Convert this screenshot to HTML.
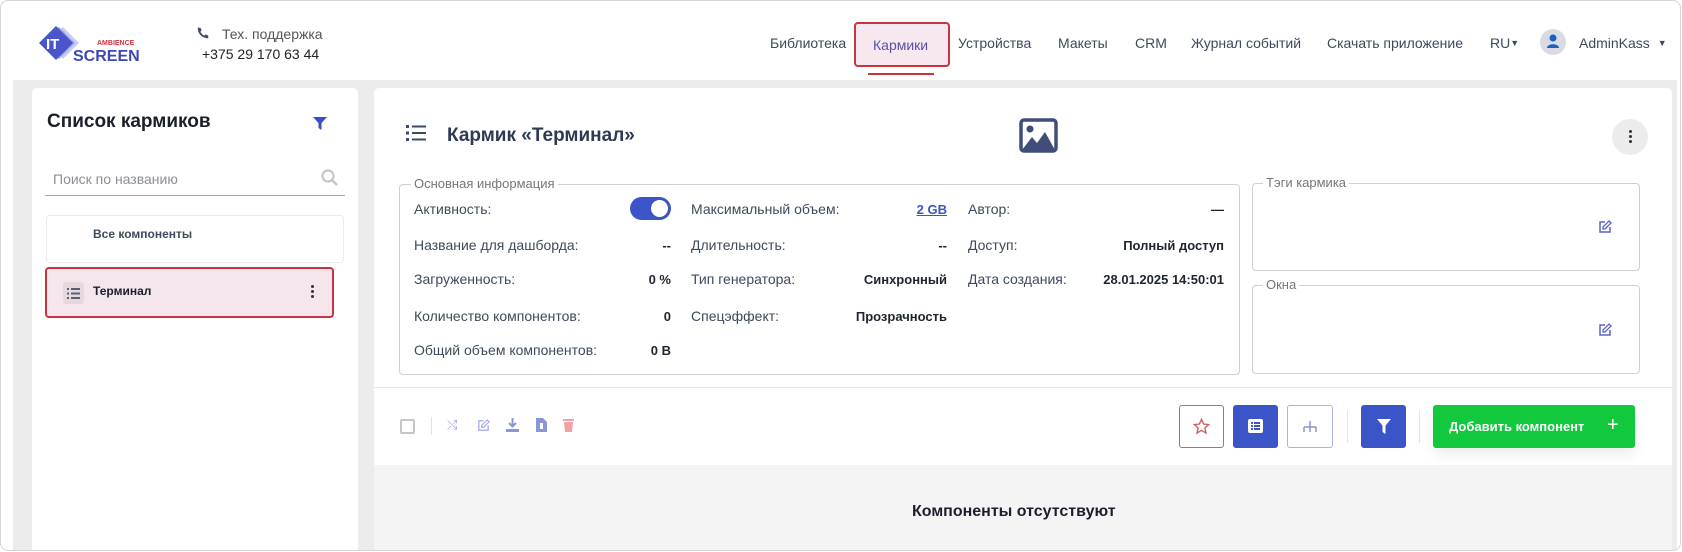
<!DOCTYPE html>
<html><head><meta charset="utf-8"><style>
*{box-sizing:border-box;margin:0;padding:0}
body{width:1682px;height:552px;overflow:hidden;background:#fff;font-family:"Liberation Sans",sans-serif;color:#3d4a5c;position:relative}
.frame{position:absolute;left:0;top:0;width:1681px;height:551px;border:1px solid #d6d6d6;border-radius:8px;overflow:hidden;background:#fff}
.abs{position:absolute;white-space:nowrap}
.gray{position:absolute;left:12px;top:79px;right:3px;bottom:0;background:#ececec}
.panel{position:absolute;background:#fff;border-radius:5px}
.nav{font-size:14px;color:#3d4a5c;top:34px}
.lbl{font-size:14px;color:#3d4a5c}
.val{font-size:13px;font-weight:bold;color:#1f2530;text-align:right}
.btn{position:absolute;top:404px;height:43px;border-radius:3px}
.dot{position:absolute;width:3px;height:3px;border-radius:50%;background:#333}
</style></head><body><div class="frame">
<svg class="abs" style="left:38px;top:22px" width="100" height="42" viewBox="0 0 100 42">
<path d="M24 4 L40 20 L24 36 L8 20Z" fill="#c8cdf5"/>
<path d="M20 4 L36 20 L20 36 L4 20Z" fill="#9aa3ec"/>
<path d="M17 3 L34 20 L17 37 L0 20Z" fill="#4a55c9"/>
<text x="7" y="26" font-family="Liberation Sans" font-weight="bold" font-size="15" fill="#fff">IT</text>
<text x="58" y="22" font-family="Liberation Sans" font-weight="bold" font-size="7" fill="#d0343f">AMBIENCE</text>
<text x="34" y="38" font-family="Liberation Sans" font-weight="bold" font-size="16" fill="#3b48b8">SCREEN</text>
</svg>
<svg class="abs" style="left:195px;top:25px" width="14" height="14" viewBox="0 0 16 16"><path d="M14 11l-3-1.5-1.5 1.5C7.5 10 6 8.5 5 6.5L6.5 5 5 2 2 2C2 9 7 14 14 14Z" fill="#3d4a6a"/></svg>
<div class="abs" style="left:221px;top:25px;font-size:14px;color:#555">Тех. поддержка</div>
<div class="abs" style="left:201px;top:45px;font-size:14px;color:#222">+375 29 170 63 44</div>
<div class="abs nav" style="left:769px">Библиотека</div>
<div class="abs" style="left:853px;top:21px;width:96px;height:45px;border:2px solid #c9343f;border-radius:4px;background:#f6e8ee"></div>
<div class="abs nav" style="left:872px;top:36px;color:#5a4fa8">Кармики</div>
<div class="abs" style="left:867px;top:72px;width:66px;height:2px;background:#c9343f"></div>
<div class="abs nav" style="left:957px">Устройства</div>
<div class="abs nav" style="left:1057px">Макеты</div>
<div class="abs nav" style="left:1134px">CRM</div>
<div class="abs nav" style="left:1190px">Журнал событий</div>
<div class="abs nav" style="left:1326px">Скачать приложение</div>
<div class="abs nav" style="left:1489px">RU<span style="font-size:9px;vertical-align:2px">▼</span></div>
<div class="abs" style="left:1539px;top:28px;width:26px;height:26px;border-radius:50%;background:#d8dbe3"></div>
<svg class="abs" style="left:1545px;top:32px" width="14" height="16" viewBox="0 0 14 16"><circle cx="7" cy="5" r="3.5" fill="#1c5fbf"/><path d="M1 15 C1 10 13 10 13 15Z" fill="#1c5fbf"/></svg>
<div class="abs nav" style="left:1578px">AdminKass <span style="font-size:9px;vertical-align:2px;margin-left:4px">▼</span></div>

<div class="gray"></div>
<div class="panel" style="left:31px;top:87px;width:326px;height:470px"></div>
<div class="abs" style="left:46px;top:110px;font-size:19px;font-weight:bold;color:#1a1f2b">Список кармиков</div>
<svg class="abs" style="left:312px;top:116px" width="14" height="13" viewBox="0 0 14 13"><path d="M0 0H14L8.5 6V13L5.5 11V6Z" fill="#3a4bc4"/></svg>
<div class="abs" style="left:52px;top:170px;font-size:14px;color:#8a8f98">Поиск по названию</div>
<svg class="abs" style="left:320px;top:168px" width="18" height="18" viewBox="0 0 18 18"><circle cx="7" cy="7" r="5.5" fill="none" stroke="#c4c6cb" stroke-width="2.2"/><path d="M11 11L16 16" stroke="#c4c6cb" stroke-width="2.5"/></svg>
<div class="abs" style="left:44px;top:194px;width:300px;height:1px;background:#a9abb0"></div>
<div class="abs" style="left:45px;top:214px;width:298px;height:48px;border:1px solid #ebebeb;border-radius:4px"></div>
<div class="abs" style="left:92px;top:226px;font-size:12px;font-weight:bold;color:#3d4a5c">Все компоненты</div>
<div class="abs" style="left:44px;top:266px;width:289px;height:51px;border:2px solid #c9343f;border-radius:4px;background:#f4e6ec"></div>
<div class="abs" style="left:62px;top:281px;width:21px;height:22px;border-radius:3px;background:#e6d8dc"></div>
<svg class="abs" style="left:66px;top:287px" width="13" height="11" viewBox="0 0 13 11"><g fill="#5a6072"><rect x="0" y="0" width="2" height="2"/><rect x="4" y="0" width="9" height="2"/><rect x="0" y="4.5" width="2" height="2"/><rect x="4" y="4.5" width="9" height="2"/><rect x="0" y="9" width="2" height="2"/><rect x="4" y="9" width="9" height="2"/></g></svg>
<div class="abs" style="left:92px;top:283px;font-size:12px;font-weight:bold;color:#1a1f2b">Терминал</div>
<div class="dot" style="left:310px;top:284px"></div><div class="dot" style="left:310px;top:289px"></div><div class="dot" style="left:310px;top:294px"></div>

<div class="panel" style="left:373px;top:87px;width:1298px;height:470px"></div>
<div class="abs" style="left:373px;top:464px;width:1298px;height:90px;background:#f4f4f4"></div>
<svg class="abs" style="left:405px;top:124px" width="20" height="16" viewBox="0 0 20 16"><g fill="#3d4a6a"><rect x="0" y="0" width="3" height="3"/><rect x="6" y="0.5" width="14" height="2"/><rect x="0" y="6.5" width="3" height="3"/><rect x="6" y="7" width="14" height="2"/><rect x="0" y="13" width="3" height="3"/><rect x="6" y="13.5" width="14" height="2"/></g></svg>
<div class="abs" style="left:446px;top:124px;font-size:19px;font-weight:bold;color:#2f3a52">Кармик «Терминал»</div>
<svg class="abs" style="left:1018px;top:117px" width="39" height="35" viewBox="0 0 39 35"><rect x="2" y="2" width="35" height="31" rx="3" fill="none" stroke="#3f4d7a" stroke-width="3.5"/><circle cx="11" cy="11" r="3.5" fill="#3f4d7a"/><path d="M3 32 L13 19 L18 25 L26 14 L36 32Z" fill="#3f4d7a"/></svg>
<div class="abs" style="left:1611px;top:118px;width:36px;height:36px;border-radius:50%;background:#ececec"></div>
<div class="dot" style="left:1628px;top:129px"></div><div class="dot" style="left:1628px;top:134px"></div><div class="dot" style="left:1628px;top:139px"></div>

<div class="abs" style="left:398px;top:183px;width:841px;height:191px;border:1px solid #cfcfcf;border-radius:4px"></div>
<div class="abs" style="left:410px;top:175px;padding:0 3px;background:#fff;font-size:13px;color:#777">Основная информация</div>

<div class="abs lbl" style="left:413px;top:200px">Активность:</div>
<div class="abs" style="left:629px;top:196px;width:41px;height:23px;border-radius:12px;background:#3b55c9"></div>
<div class="abs" style="left:650px;top:199px;width:17px;height:17px;border-radius:50%;background:#fff"></div>
<div class="abs lbl" style="left:413px;top:236px">Название для дашборда:</div>
<div class="abs val" style="left:600px;width:70px;top:237px">--</div>
<div class="abs lbl" style="left:413px;top:270px">Загруженность:</div>
<div class="abs val" style="left:600px;width:70px;top:271px">0 %</div>
<div class="abs lbl" style="left:413px;top:307px">Количество компонентов:</div>
<div class="abs val" style="left:600px;width:70px;top:308px">0</div>
<div class="abs lbl" style="left:413px;top:341px">Общий объем компонентов:</div>
<div class="abs val" style="left:600px;width:70px;top:342px">0 B</div>

<div class="abs lbl" style="left:690px;top:200px">Максимальный объем:</div>
<div class="abs val" style="left:846px;width:100px;top:201px;color:#3b55c9;text-decoration:underline">2 GB</div>
<div class="abs lbl" style="left:690px;top:236px">Длительность:</div>
<div class="abs val" style="left:846px;width:100px;top:237px">--</div>
<div class="abs lbl" style="left:690px;top:270px">Тип генератора:</div>
<div class="abs val" style="left:846px;width:100px;top:271px">Синхронный</div>
<div class="abs lbl" style="left:690px;top:307px">Спецэффект:</div>
<div class="abs val" style="left:806px;width:140px;top:308px">Прозрачность</div>

<div class="abs lbl" style="left:967px;top:200px">Автор:</div>
<div class="abs val" style="left:1123px;width:100px;top:201px">—</div>
<div class="abs lbl" style="left:967px;top:236px">Доступ:</div>
<div class="abs val" style="left:1083px;width:140px;top:237px">Полный доступ</div>
<div class="abs lbl" style="left:967px;top:270px">Дата создания:</div>
<div class="abs val" style="left:1063px;width:160px;top:271px">28.01.2025 14:50:01</div>

<div class="abs" style="left:1251px;top:182px;width:388px;height:88px;border:1px solid #cfcfcf;border-radius:4px"></div>
<div class="abs" style="left:1262px;top:174px;padding:0 3px;background:#fff;font-size:13px;color:#777">Тэги кармика</div>
<div class="abs" style="left:1251px;top:284px;width:388px;height:89px;border:1px solid #cfcfcf;border-radius:4px"></div>
<div class="abs" style="left:1262px;top:276px;padding:0 3px;background:#fff;font-size:13px;color:#777">Окна</div>
<svg class="abs" style="left:1597px;top:219px" width="14" height="14" viewBox="0 0 14 14"><path d="M7 2H2V12H12V7" fill="none" stroke="#5b63c9" stroke-width="1.5"/><path d="M11 1L13 3L7 9L5 9L5 7Z" fill="none" stroke="#5b63c9" stroke-width="1.3"/></svg>
<svg class="abs" style="left:1597px;top:322px" width="14" height="14" viewBox="0 0 14 14"><path d="M7 2H2V12H12V7" fill="none" stroke="#5b63c9" stroke-width="1.5"/><path d="M11 1L13 3L7 9L5 9L5 7Z" fill="none" stroke="#5b63c9" stroke-width="1.3"/></svg>

<div class="abs" style="left:373px;top:386px;width:1298px;height:1px;background:#e6e6e6"></div>
<div class="abs" style="left:399px;top:418px;width:15px;height:15px;border:2px solid #c6c6c6;border-radius:2px"></div>
<div class="abs" style="left:430px;top:416px;width:1px;height:18px;background:#e3e3e3"></div>
<div class="abs" style="left:446px;top:416px;font-size:13px;color:#9aa3e0">⤭</div>
<svg class="abs" style="left:476px;top:418px" width="13" height="13" viewBox="0 0 14 14"><path d="M7 2H2V12H12V7" fill="none" stroke="#a8b0e6" stroke-width="1.5"/><path d="M11 1L13 3L7 9L5 9L5 7Z" fill="none" stroke="#a8b0e6" stroke-width="1.3"/></svg>
<svg class="abs" style="left:505px;top:417px" width="13" height="14" viewBox="0 0 13 14"><path d="M6.5 0V8M3 5L6.5 8.5 10 5" stroke="#8a96d8" stroke-width="2" fill="none"/><rect x="0" y="11" width="13" height="3" fill="#8a96d8"/></svg>
<svg class="abs" style="left:535px;top:417px" width="11" height="14" viewBox="0 0 11 14"><path d="M0 0H7L11 4V14H0Z" fill="#8a96d8"/><rect x="4" y="5" width="3" height="6" fill="#fff"/></svg>
<svg class="abs" style="left:562px;top:417px" width="11" height="14" viewBox="0 0 11 14"><rect x="0" y="1" width="11" height="2" fill="#f0a0a6"/><path d="M1 4H10L9 14H2Z" fill="#f0a0a6"/></svg>

<div class="btn" style="left:1178px;width:45px;border:1px solid #c46a50;background:#fff"></div>
<svg class="abs" style="left:1192px;top:417px" width="17" height="17" viewBox="0 0 24 24"><path d="M12 2l3 6.5 7 .8-5.2 4.8 1.5 7L12 17.5 5.7 21.1l1.5-7L2 9.3l7-.8Z" fill="none" stroke="#d06060" stroke-width="2"/></svg>
<div class="btn" style="left:1232px;width:45px;background:#3b55c9"></div>
<svg class="abs" style="left:1247px;top:418px" width="15" height="14" viewBox="0 0 15 14"><rect x="0" y="0" width="15" height="14" rx="2" fill="#fff"/><g fill="#3b55c9"><rect x="3" y="3" width="2" height="2"/><rect x="6" y="3" width="6" height="2"/><rect x="3" y="6" width="2" height="2"/><rect x="6" y="6" width="6" height="2"/><rect x="3" y="9" width="2" height="2"/><rect x="6" y="9" width="6" height="2"/></g></svg>
<div class="btn" style="left:1286px;width:46px;border:1px solid #a9b2ea;background:#fff"></div>
<svg class="abs" style="left:1300px;top:418px" width="18" height="16" viewBox="0 0 18 16"><g fill="none" stroke="#8a96d8" stroke-width="1.5"><path d="M9 2V8M3 8H15M3 8V13M15 8V13M9 8V13"/></g></svg>
<div class="abs" style="left:1346px;top:410px;width:1px;height:32px;background:#e3e3e3"></div>
<div class="btn" style="left:1360px;width:45px;background:#3b55c9"></div>
<svg class="abs" style="left:1376px;top:418px" width="14" height="15" viewBox="0 0 14 15"><path d="M0 0H14L8.5 6.5V15L5.5 13V6.5Z" fill="#fff"/></svg>
<div class="abs" style="left:1418px;top:410px;width:1px;height:32px;background:#e3e3e3"></div>
<div class="btn" style="left:1432px;width:202px;background:#12c83c;box-shadow:0 6px 14px rgba(0,0,0,.08)"></div>
<div class="abs" style="left:1448px;top:418px;font-size:13px;font-weight:bold;color:#fff">Добавить компонент</div>
<div class="abs" style="left:1606px;top:413px;font-size:20px;color:#fff">+</div>

<div class="abs" style="left:911px;top:502px;font-size:16px;font-weight:bold;color:#1a1f2b">Компоненты отсутствуют</div>
</div></body></html>
